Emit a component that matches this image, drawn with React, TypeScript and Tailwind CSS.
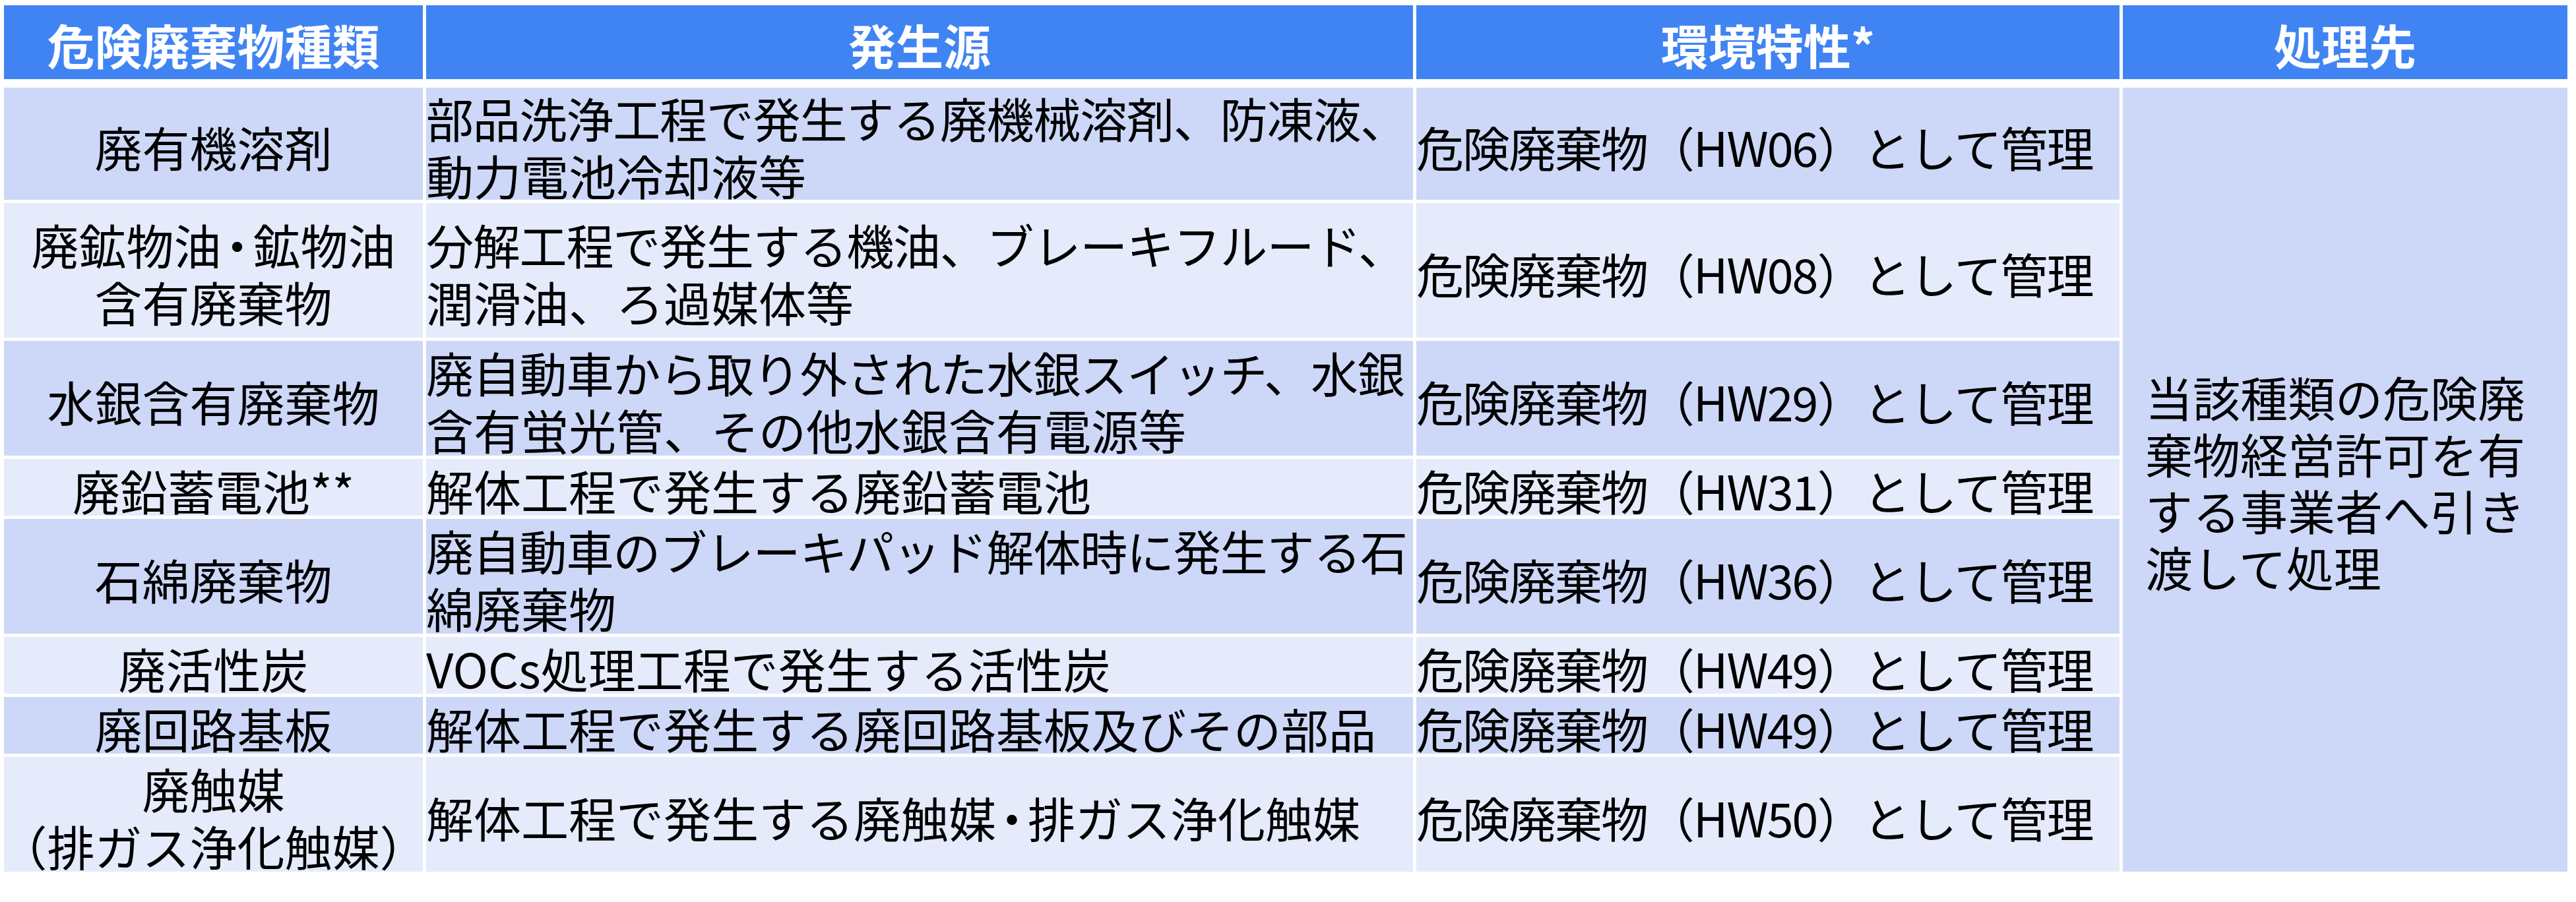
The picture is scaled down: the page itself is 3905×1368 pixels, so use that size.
import React from "react";

type Row = {
  c1: React.ReactNode[];
  c2: React.ReactNode[];
  code: string;
  dark: boolean;
};

const Tight = ({ children }: { children: React.ReactNode }) => (
  <span className="tracking-[-12px]">{children}</span>
);

const rows: Row[] = [
  { c1: ["廃有機溶剤"], c2: ["部品洗浄工程で発生する廃機械溶剤、防凍液、", "動力電池冷却液等"], code: "HW06", dark: true },
  {
    c1: [
      <>
        廃鉱物<Tight>油・</Tight>鉱物油
      </>,
      "含有廃棄物",
    ],
    c2: ["分解工程で発生する機油、ブレーキフルード、", "潤滑油、ろ過媒体等"],
    code: "HW08",
    dark: false,
  },
  { c1: ["水銀含有廃棄物"], c2: ["廃自動車から取り外された水銀スイッチ、水銀", "含有蛍光管、その他水銀含有電源等"], code: "HW29", dark: true },
  { c1: ["廃鉛蓄電池**"], c2: ["解体工程で発生する廃鉛蓄電池"], code: "HW31", dark: false },
  { c1: ["石綿廃棄物"], c2: ["廃自動車のブレーキパッド解体時に発生する石", "綿廃棄物"], code: "HW36", dark: true },
  { c1: ["廃活性炭"], c2: ["VOCs処理工程で発生する活性炭"], code: "HW49", dark: false },
  { c1: ["廃回路基板"], c2: ["解体工程で発生する廃回路基板及びその部品"], code: "HW49", dark: true },
  {
    c1: ["廃触媒", "（排ガス浄化触媒）"],
    c2: [
      <>
        解体工程で発生する廃触<Tight>媒・</Tight>排ガス浄化触媒
      </>,
    ],
    code: "HW50",
    dark: false,
  },
];

const font = { fontFamily: '"Noto Sans CJK JP", "Noto Sans", sans-serif' };

export default function App() {
  return (
    <div
      className="w-[3905px] h-[1368px] bg-white pl-[6px] pt-[8px] text-black"
      style={font}
    >
      <div className="grid grid-cols-[635px_1496px_1066px_674px] gap-x-[5px] h-[112px]">
        {["危険廃棄物種類", "発生源", "環境特性*", "処理先"].map((h) => (
          <div
            key={h}
            className="bg-[#4084F4] text-white font-bold text-[72px] leading-[88px] flex items-center justify-center pt-[6px] whitespace-nowrap"
          >
            {h}
          </div>
        ))}
      </div>
      <div className="mt-[13px] grid grid-cols-[635px_1496px_1066px_674px] grid-rows-[170px_204px_174px_86px_174px_86px_86px_174px] gap-x-[5px] gap-y-[5px] text-[72px] leading-[87px]">
        {rows.map((r, i) => {
          const bg = r.dark ? "bg-[#CDD8F8]" : "bg-[#E5EBFB]";
          return (
            <React.Fragment key={i}>
              <div className={`${bg} flex flex-col items-center justify-center pt-[6px] text-center whitespace-nowrap`}>
                {r.c1.map((l, j) => (
                  <div key={j}>{l}</div>
                ))}
              </div>
              <div className={`${bg} flex flex-col justify-center pt-[6px] whitespace-nowrap`}>
                {r.c2.map((l, j) => (
                  <div
                    key={j}
                    className={typeof l === "string" && l.length >= 21 ? "tracking-[-1.2px]" : ""}
                  >
                    {l}
                  </div>
                ))}
              </div>
              <div className={`${bg} flex items-center pt-[6px] whitespace-nowrap tracking-[-2px]`}>
                危険廃棄物（{r.code}）として管理
              </div>
            </React.Fragment>
          );
        })}
        <div className="bg-[#CDD8F8] col-start-4 row-start-1 row-span-8 flex flex-col justify-center pl-[34px] pt-[4px] leading-[86px] whitespace-nowrap">
          <div>当該種類の危険廃</div>
          <div>棄物経営許可を有</div>
          <div>する事業者へ引き</div>
          <div>渡して処理</div>
        </div>
      </div>
    </div>
  );
}
